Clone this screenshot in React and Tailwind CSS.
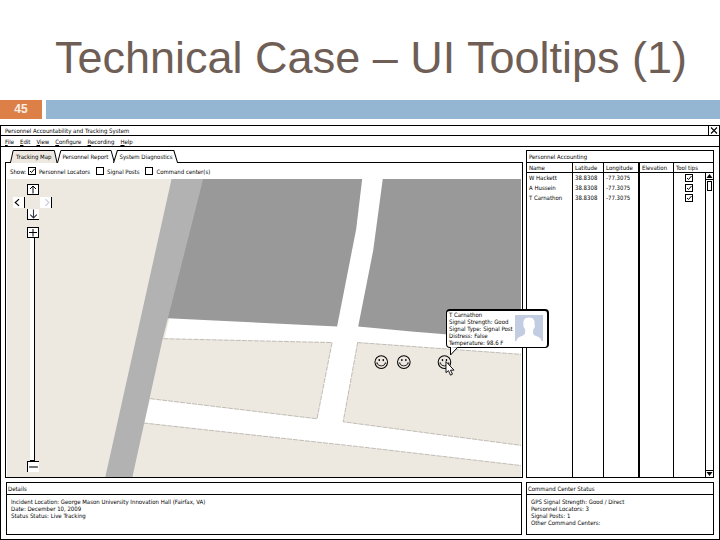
import React, { useState } from "react";

const menus = ["File", "Edit", "View", "Configure", "Recording", "Help"];
const tabs = ["Tracking Map", "Personnel Report", "System Diagnostics"];
const people = [
    { name: "W Hackett", lat: "38.8308", lng: "-77.3075" },
    { name: "A Hussein", lat: "38.8308", lng: "-77.3075" },
    { name: "T Carnathon", lat: "38.8308", lng: "-77.3075" },
];

function Check({ id, label, checked, onChange }) {
    return (
        <span className="relative block h-2 w-2 shrink-0">
            <input id={id} type="checkbox" aria-label={label} checked={checked} onChange={onChange}
                className="block h-2 w-2 appearance-none border border-black bg-white" />
            {checked && (
                <svg viewBox="0 0 8 8" className="pointer-events-none absolute inset-0 h-2 w-2">
                    <path d="M2 4 L3.5 5.5 L6.5 2" fill="none" stroke="black" strokeWidth="1" />
                </svg>
            )}
        </span>
    );
}

function Smiley({ x, y }) {
    return (
        <g transform={`translate(${x} ${y})`} fill="none" stroke="black">
            <circle r="6.3" strokeWidth="1" />
            <path d="M-4.2 0.8 Q-3.5 3.8 0 3.8 Q3.5 3.8 4.2 0.8 M-5 1.1 L-3.6 0.7 M5 1.1 L3.6 0.7" strokeWidth="0.8" />
            <ellipse cx="-2" cy="-2" rx="0.8" ry="1.1" fill="black" stroke="none" />
            <ellipse cx="2" cy="-2" rx="0.8" ry="1.1" fill="black" stroke="none" />
        </g>
    );
}

function StreetMap() {
    return (
        <svg viewBox="0 0 514 297" preserveAspectRatio="xMinYMin slice" className="absolute inset-0 h-full w-full">
            <rect width="514" height="297" fill="#ede9e1" />
            <path d="M195 0 H514 V297 H124 Z" fill="white" />
            {/* buildings */}
            <path d="M190 0 H354 L348 50 L329 147 L155 138.500 Z" fill="#999999" />
            <path d="M374.500 0 H514 V161 L403 152 L350 147 L365 71 Z" fill="#999999" />
            {/* blocks */}
            <g fill="#ede9e1" stroke="#a9a59c" strokeWidth="0.7" strokeDasharray="5 1">
                <path d="M150 159 L324 163 L309 239 L135 218 Z" />
                <path d="M349.500 163 L516 175 V266 L335 242 Z" />
                <path d="M130 242.500 L353 267 L516 286 V300 H110 Z" />
            </g>
            <path d="M164 0 H195.500 L155 160 L125 297 H98 Z" fill="#b2b2b2" />
            <Smiley x={373} y={182.5} />
            <Smiley x={395.5} y={182.5} />
            <Smiley x={436} y={182.5} />
            <path d="M437.500 182 V193 L440 191 L442 195.500 L444 194.500 L442 190.500 H445.500 Z" fill="white" stroke="black" strokeWidth="0.9" />
        </svg>
    );
}

function PanButton({ label, d, className, stroke = "black" }) {
    return (
        <button aria-label={label} className={"h-[11px] w-3 border-black bg-white " + className}>
            <svg viewBox="0 0 10 9" className="h-full w-full" fill="none" stroke={stroke} strokeWidth="1">
                <path d={d} />
            </svg>
        </button>
    );
}

function MapControls({ zoom, setzoom }) {
    return (
        <div className="absolute bottom-[5px] left-[6px] top-[5px] flex w-[39px] flex-col items-center">
            <PanButton label="Pan up" d="M5 8.5 V1 M2 4 L5 1 L8 4" className="border" />
            <div className="mb-px mt-0.5 flex w-full justify-between">
                <PanButton label="Pan left" d="M5.500 1.500 L2 4.500 L5.500 7.500" className="border-r" />
                <PanButton label="Pan right" d="M5 1.500 L8 4.500 L5 7.500" className="border-r" stroke="#c8ccd8" />
            </div>
            <PanButton label="Pan down" d="M5 0.500 V8 M2 5 L5 8 L8 5" className="border-b border-l" stroke="#333844" />
            <PanButton label="Zoom in" d="M1 4.500 H9 M5 1 V8.500" className="mt-[7px] border" />
            <input type="range" aria-label="Zoom" min="0" max="10" value={zoom} onChange={(e) => setzoom(e.target.value)}
                className="my-1 min-h-0 w-[5px] flex-1 appearance-none border-b border-r border-black bg-white [writing-mode:vertical-lr] [&::-webkit-slider-thumb]:h-1 [&::-webkit-slider-thumb]:w-1 [&::-webkit-slider-thumb]:appearance-none" />
            <PanButton label="Zoom out" d="M1 4.500 H9" className="border-l border-t" />
        </div>
    );
}

function Tooltip() {
    return (
        <div role="tooltip" className="absolute left-[439px] top-[130px] z-10 flex w-[103px] justify-between rounded-[4px] border border-r-2 border-t-2 border-black bg-white pb-px pl-0.5 pr-1">
            <div className="whitespace-nowrap leading-[7px]">
                <p>T Carnathon</p>
                <p>Signal Strength: Good</p>
                <p>Signal Type: Signal Post</p>
                <p>Distress: False</p>
                <p>Temperature: 98.6 F</p>
            </div>
            <svg viewBox="0 0 28 26" className="mt-1 h-[26px] w-7 shrink-0">
                <rect width="28" height="26" fill="#c3cde2" />
                <path d="M14 2.500 C9 2.500 8 6 8.500 9.500 C8 11 9 13 10 14 C10.500 18 10 20 7 21 C4 22 2 23 1.500 26 H26.500 C26 23 24 22 21 21 C18 20 17.500 18 18.500 14 C19.500 13 20.500 11 19.500 9.500 C20 6 19 2.500 14 2.500 Z" fill="white" />
            </svg>
            <svg viewBox="0 0 9 9" className="absolute left-[2px] top-full h-[9px] w-[9px]">
                <path d="M1.500 0 V8 L8.500 0.500" fill="white" stroke="black" />
            </svg>
        </div>
    );
}

function InfoPanel({ title, lines, className }) {
    return (
        <section className={"border border-black pb-2 " + className}>
            <h2 className="border-b border-black px-px py-px leading-[9px]">{title}</h2>
            <div className="px-1 pt-[3px] leading-[7px]">
                {lines.map((line) => <p key={line}>{line}</p>)}
            </div>
        </section>
    );
}

function PersonnelTable({ tips, toggle }) {
    const head = "h-[10px] border-b border-black p-0 pl-0.5 text-left font-normal leading-[9px]";
    return (
        <section className="flex flex-col border border-black">
            <h2 className="border-b border-black px-0.5 py-px leading-[9px]">Personnel Accounting</h2>
            <table className="w-full flex-1 table-fixed border-separate border-spacing-0">
                <colgroup>
                    <col className="w-[45px]" />
                    <col className="w-[31px]" />
                    <col className="w-[35px]" />
                    <col className="w-[35px]" />
                    <col />
                    <col className="w-[8px]" />
                </colgroup>
                <thead>
                    <tr>
                        <th className={head}>Name</th>
                        <th className={head + " border-l"}>Latitude</th>
                        <th className={head + " border-l"}>Longitude</th>
                        <th className={head + " border-l-2"}>Elevation</th>
                        <th colSpan="2" className={head + " border-l"}>Tool tips</th>
                    </tr>
                </thead>
                <tbody className="leading-[10px]">
                    {people.map((p, i) => (
                        <tr key={p.name} className="h-[10px]">
                            <td className="p-0 pl-0.5">{p.name}</td>
                            <td className="border-l border-black p-0 pl-0.5">{p.lat}</td>
                            <td className="border-l border-black p-0 pl-0.5">{p.lng}</td>
                            <td className="border-l-2 border-black p-0"></td>
                            <td className="border-l border-black p-0">
                                <div className="flex justify-center">
                                    <Check label={"Tool tip for " + p.name} checked={tips[i]} onChange={() => toggle(i)} />
                                </div>
                            </td>
                            {i === 0 && (
                                <td rowSpan="4" className="h-px border-l border-black p-0 align-top">
                                    <div className="flex h-full flex-col justify-between">
                                        <div>
                                            <button aria-label="Scroll up" className="block h-[7px] w-full border-b border-black">
                                                <svg viewBox="0 0 7 6" className="h-full w-full"><path d="M3.500 1 L6.500 5 H0.500 Z" /></svg>
                                            </button>
                                            <div className="mx-px mt-px h-[10px] border border-black"></div>
                                        </div>
                                        <button aria-label="Scroll down" className="block h-[7px] w-full border-t border-black">
                                            <svg viewBox="0 0 7 6" className="h-full w-full"><path d="M3.500 5 L6.500 1 H0.500 Z" /></svg>
                                        </button>
                                    </div>
                                </td>
                            )}
                        </tr>
                    ))}
                    <tr>
                        <td></td>
                        <td className="border-l border-black"></td>
                        <td className="border-l border-black"></td>
                        <td className="border-l-2 border-black"></td>
                        <td className="border-l border-black"></td>
                    </tr>
                </tbody>
            </table>
        </section>
    );
}

function App() {
    const [tab, changetab] = useState(0);
    const [zoom, setzoom] = useState(5);
    const [show, changeshow] = useState({ "Personnel Locators": true, "Signal Posts": false, "Command center(s)": false });
    const [tips, changetips] = useState([true, true, true]);

    return (
        <div className="flex min-h-screen flex-col bg-white font-['Liberation_Sans',sans-serif]">
            <h1 className="pb-3.5 pl-[55px] pt-[30px] text-[45px] leading-[56px] text-[#6f5e55]">Technical Case – UI Tooltips (1)</h1>
            <div className="flex h-[19px] gap-1">
                <div className="w-[42px] bg-[#dd8047] text-center text-xs font-bold leading-[19px] text-[#f7efe6]">45</div>
                <div className="flex-1 bg-[#94b6d2]"></div>
            </div>

            <main className="mt-1.5 flex flex-1 flex-col border border-black font-['DejaVu_Sans_Condensed','Noto_Sans',sans-serif] text-[6px] text-black">
                <header className="flex h-[10px] items-center justify-between border-b border-black pl-1">
                    <span>Personnel Accountability and Tracking System</span>
                    <button aria-label="Close" className="h-full w-[11px] border-l border-black">
                        <svg viewBox="0 0 10 9" className="h-full w-full"><path d="M2 1.500 L8 7.500 M8 1.500 L2 7.500" stroke="black" strokeWidth="1.1" /></svg>
                    </button>
                </header>
                <nav className="flex h-[11px] items-center gap-1.5 border-b border-black pl-1">
                    {menus.map((m) => (
                        <button key={m} className="leading-[9px]"><u>{m[0]}</u>{m.slice(1)}</button>
                    ))}
                </nav>

                <div className="grid flex-1 grid-cols-[minmax(0,1fr)_188px] grid-rows-[1fr_auto] gap-x-[3px] gap-y-1 pb-1 pl-1 pr-[5px] pt-[3px]">
                    <div className="flex flex-col">
                        <div className="flex h-[13px]" role="tablist">
                            <div className="w-[5px] border-b border-black"></div>
                            {tabs.map((t, i) => (
                                <button key={t} role="tab" aria-selected={tab === i} onClick={() => changetab(i)} className="relative -mr-px px-1.5">
                                    <svg viewBox="0 0 60 13" preserveAspectRatio="none" className="absolute inset-0 h-full w-full">
                                        <path d="M0.500 13 L4 0.500 H56 L59.500 13" fill={tab === i ? "#ede9e1" : "white"} stroke="black" vectorEffect="non-scaling-stroke" />
                                    </svg>
                                    <span className="relative">{t}</span>
                                </button>
                            ))}
                            <div className="flex-1 border-b border-black"></div>
                        </div>
                        <div className="flex flex-1 flex-col border-x border-b border-black px-px">
                            <div className="flex h-4 items-center gap-1.5 pl-[3px]">
                                <span className="-mr-1">Show:</span>
                                {Object.keys(show).map((s) => (
                                    <div key={s} className="flex items-center gap-[3px]">
                                        <Check id={s} label={s} checked={show[s]} onChange={() => changeshow({ ...show, [s]: !show[s] })} />
                                        <label htmlFor={s}>{s}</label>
                                    </div>
                                ))}
                            </div>
                            <div className="relative flex-1">
                                <StreetMap />
                                <MapControls zoom={zoom} setzoom={setzoom} />
                                <Tooltip />
                            </div>
                        </div>
                    </div>
                    <PersonnelTable tips={tips} toggle={(i) => changetips(tips.map((v, n) => (n === i ? !v : v)))} />
                    <InfoPanel title="Details" className="mx-px" lines={[
                        "Incident Location: George Mason University Innovation Hall (Fairfax, VA)",
                        "Date: December 10, 2009",
                        "Status Status: Live Tracking",
                    ]} />
                    <InfoPanel title="Command Center Status" className="" lines={[
                        "GPS Signal Strength: Good / Direct",
                        "Personnel Locators: 3",
                        "Signal Posts: 1",
                        "Other Command Centers:",
                    ]} />
                </div>
            </main>
        </div>
    );
}

export default App;
